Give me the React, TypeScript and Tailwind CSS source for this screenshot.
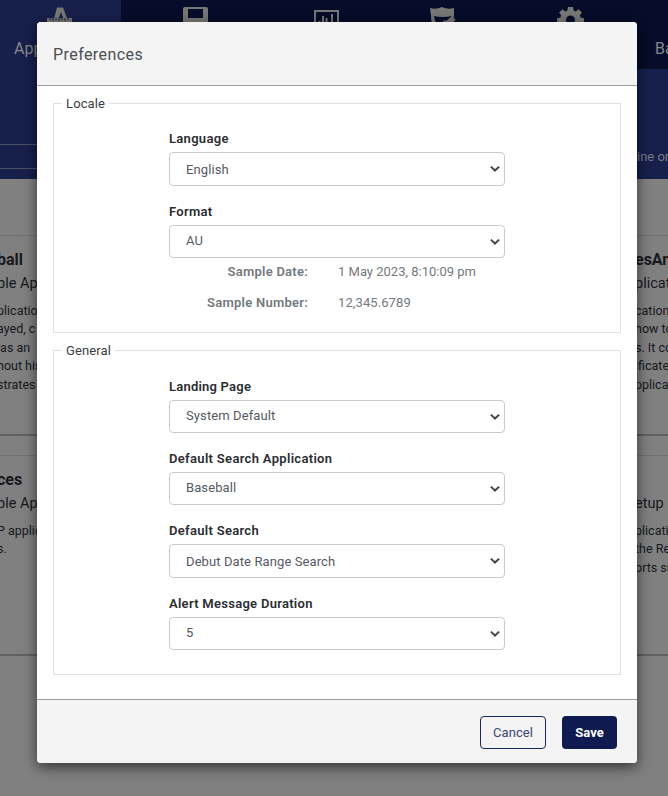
import type { ReactNode } from "react";

function Chevron() {
  return (
    <svg className="pointer-events-none absolute top-[11px] right-[4px] h-[10px] w-[10px]" viewBox="0 0 10 10" fill="none" stroke="#45474c" strokeWidth="2">
      <path d="M0.9 2.6 5 6.5 9.1 2.6" />
    </svg>
  );
}

function Field({ label, value, tall, ls }: { label: string; value: string; tall?: boolean; ls: string }) {
  return (
    <div className="flex flex-col">
      <div className={`h-[18px] text-[13px] leading-[18px] font-semibold text-[#2b2d31] ${ls}`}>{label}</div>
      <div className={`relative mt-[4px] flex items-center rounded-[4px] border border-[#c8cacc] pl-4 text-[13px] tracking-[0.1px] text-[#565a5f] ${tall ? "h-[34px] pt-px" : "h-[33px] pb-px"}`}>
        {value}
        <Chevron />
      </div>
    </div>
  );
}

function Group({ title, className, children }: { title: string; className: string; children: ReactNode }) {
  return (
    <fieldset className={`relative border border-[#dfe0e1] ${className}`}>
      <div className="absolute top-[-9px] left-[8px] bg-white px-1 text-[13px] leading-[18px] tracking-[0.13px] text-[#3c3e42]">{title}</div>
      <div className="ml-[115px] w-[336px]">{children}</div>
    </fieldset>
  );
}

function Card({ title, sub, lines, className }: { title: string; sub: string; lines: string[]; className: string }) {
  return (
    <div className={`h-[201px] overflow-hidden border-t border-b-2 border-t-[#717171] border-b-[#606060] pt-[12px] whitespace-nowrap text-[#16181d] ${className}`}>
      <div className="h-6 text-[16px] leading-6 font-bold">{title}</div>
      <div className="h-6 text-[14.5px] leading-6">{sub}</div>
      <div className="mt-[6px] text-[12.5px] leading-[18.4px]">
        {lines.map((line) => (
          <div key={line}>{line}</div>
        ))}
      </div>
    </div>
  );
}

function Icons() {
  return (
    <>
      <svg className="absolute top-[6px] left-[46px]" width="28" height="26" viewBox="0 0 28 26" fill="#777775">
        <path d="M11 1.5h6L25 23h-4l-6-17-5 14H6z" />
        <path d="M1 12h25v9H1z" />
        <path d="M4 12v2M7 12v3M10 12v2M13 12v3M16 12v2M19 12v3M22 12v2" stroke="#171f4b" />
      </svg>
      <svg className="absolute top-[6px] left-[182px]" width="28" height="26" viewBox="0 0 28 26" fill="#777775">
        <path fillRule="evenodd" d="M3 1h21q2 0 2 2v21H4l-3-3V3q0-2 2-2zm3 2v9h15V3zm1 13v8h13v-8z" />
      </svg>
      <svg className="absolute top-[9px] left-[313px]" width="28" height="22" viewBox="0 0 28 22" fill="none" stroke="#777775">
        <path d="M2 2h23v18H2z" strokeWidth="2" />
        <path d="M6.5 20v-8M10 20V7M13.500 20V9M19 20V5" strokeWidth="2" />
      </svg>
      <svg className="absolute top-[6px] left-[429px]" width="28" height="26" viewBox="0 0 28 26" fill="#777775">
        <path d="M1 2q6 2 12-1 6 3 12 1v8q0 10-12 15Q1 20 2 10z" />
        <path d="M5 10q8 2 18 0l-6 5-2-1-3 6-6-5z" fill="#060c29" />
        <path d="m16 16 4 3 6-6" stroke="#777775" strokeWidth="2" fill="none" />
      </svg>
      <svg className="absolute top-[6px] left-[557px]" width="27" height="27" viewBox="0 0 27 27" fill="#777775">
        <path fillRule="evenodd" d="M11 1h5l.6 3.600 2 .8 3-2.100 3.300 3.300-2.100 3 .8 2 3.400.6v4.600l-3.400.6-.8 2 2.100 3-3.300 3.300-3-2.100-2 .8-.6 3.600h-5l-.6-3.600-2-.8-3 2.100-3.300-3.300 2.100-3-.8-2-3.400-.6v-4.600l3.400-.6.8-2-2.100-3 3.300-3.300 3 2.100 2-.8zM13.500 9.500a4.500 4.500 0 1 0 0 9 4.500 4.500 0 0 0 0-9z" />
      </svg>
    </>
  );
}

export default function App() {
  return (
    <div className="relative h-[796px] w-[668px] overflow-hidden bg-[#808080] font-[Roboto,'Liberation_Sans',sans-serif]">
      <header className="relative flex h-[69px] justify-between bg-[#060c29] text-[16px] text-[#85878d]">
        <div className="w-[121px] bg-[#171f4b] pt-[37px] pl-[14px] leading-6">Apps</div>
        <div className="w-[13px] pt-[37px] leading-6">Ba</div>
        <Icons />
      </header>
      <section className="flex h-[110px] justify-between bg-[#171f4b]">
        <div className="mt-[75px] h-[25px] w-[120px] border-y border-[#4a506d]" />
        <div className="w-[31px] pt-[79px] text-[13px] leading-[18px] whitespace-nowrap text-[#777b8e]">ine or</div>
      </section>
      <main className="flex justify-between pt-[56px]">
        <div className="flex w-[60px] flex-col gap-[19px]">
          <Card title="ball" sub="ble App" lines={["plicatio", "ayed, c", "\u00a0as an", "hout his", "strates"]} className="[&>*]:-ml-[3px]" />
          <Card title="ces" sub="ble App" lines={["P applic", "s."]} className="[&>*]:-ml-[3px]" />
        </div>
        <div className="flex w-[34px] flex-col gap-[19px]">
          <Card title="esAn" sub="plicat" lines={["cation", "how to", "s. It co", "ificate", "pplica"]} className="[&>*]:ml-px" />
          <Card title={"\u00a0"} sub="etup" lines={["plicatio", "the Re", "orts su"]} className="[&>*]:ml-px" />
        </div>
      </main>

      <div role="dialog" className="absolute top-[22px] left-[37px] flex h-[741px] w-[600px] flex-col overflow-hidden rounded-[4px] bg-white shadow-[0_4px_14px_rgba(0,0,0,0.6)]">
        <div className="flex h-[64px] shrink-0 items-center border-b border-[#9c9da0] bg-[#f4f4f4] pt-[2px] pl-4 text-[16px] tracking-[0.43px] text-[#4c4e52]">Preferences</div>
        <div className="flex flex-1 flex-col gap-[17px] px-4 pt-[17px]">
          <Group title="Locale" className="h-[230px] pt-[26px]">
            <div className="flex flex-col gap-[17px]">
              <Field label="Language" value="English" tall ls="tracking-[0.3px]" />
              <Field label="Format" value="AU" ls="tracking-[0.3px]" />
            </div>
            <div className="mt-[5px] grid grid-cols-[139px_1fr] gap-x-[30px] gap-y-[13px] text-[13px] leading-[18px] text-[#74797e]">
              <div className="text-right font-semibold tracking-[0.25px]">Sample Date:</div>
              <div>1 May 2023, 8:10:09 pm</div>
              <div className="text-right font-semibold tracking-[0.25px]">Sample Number:</div>
              <div className="tracking-[0.1px]">12,345.6789</div>
            </div>
          </Group>
          <Group title="General" className="h-[325px] pt-[27px]">
            <div className="flex flex-col gap-[17px]">
              <Field label="Landing Page" value="System Default" ls="tracking-[0.22px]" />
              <Field label="Default Search Application" value="Baseball" ls="tracking-[0.32px]" />
              <Field label="Default Search" value="Debut Date Range Search" tall ls="tracking-[0.3px]" />
              <Field label="Alert Message Duration" value="5" ls="tracking-[0.28px]" />
            </div>
          </Group>
        </div>
        <div className="flex h-[64px] shrink-0 items-center justify-end gap-4 border-t border-[#9c9da0] bg-[#f4f4f4] pt-px pr-5 text-[13px]">
          <button className="h-[33px] w-[66px] rounded-[4px] border border-[#1b2558] pt-px tracking-[0.1px] text-[#3c4672]">Cancel</button>
          <button className="h-[33px] w-[55px] rounded-[4px] bg-[#0f1a50] pt-px font-bold text-white">Save</button>
        </div>
      </div>
    </div>
  );
}
